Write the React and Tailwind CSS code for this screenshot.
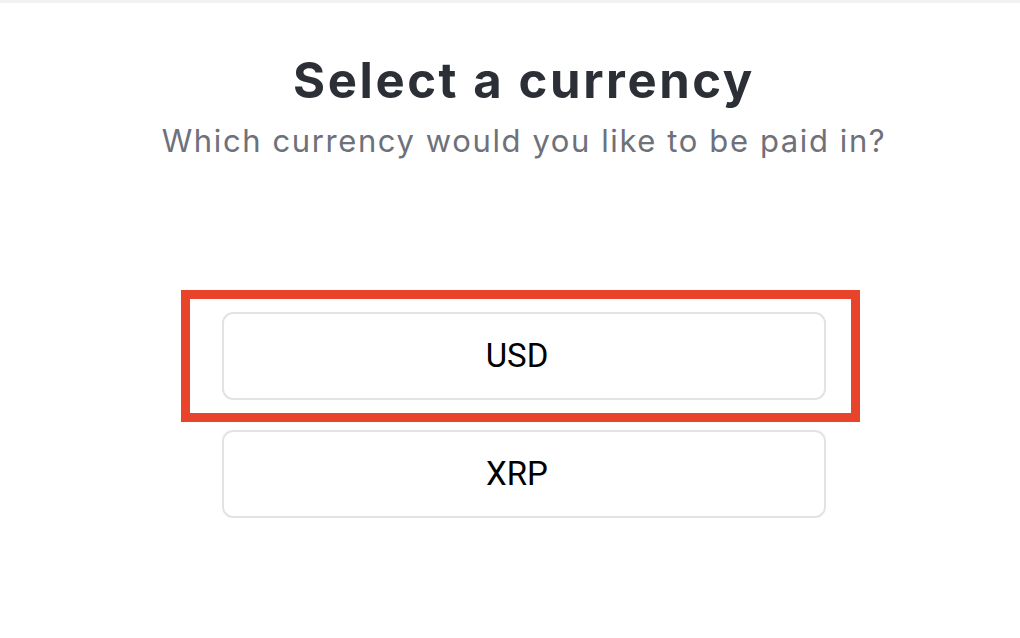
import React, { useState } from "react";

const currencies = ["USD", "XRP"];

export default function App() {
  const [selected, setSelected] = useState("USD");

  return (
    <div className="w-[1020px] h-[638px] bg-white overflow-hidden">
      <div className="h-[3px] bg-[#f2f2f2]" />
      <div className="flex flex-col items-center pl-[28px]">
        {/* Heading */}
        <h1 className="mt-[46px] text-[49px] leading-[64px] font-bold text-[#2c3036] font-['Inter',sans-serif] tracking-[2.6px]">
          Select a currency
        </h1>
        <p className="mt-[6px] text-[31px] leading-[44px] text-[#6e717a] font-['Inter',sans-serif] tracking-[1.6px]">
          Which currency would you like to be paid in?
        </p>

        {/* Options */}
        <div className="mt-[149px] flex flex-col gap-[30px] w-[604px]">
          {currencies.map((c) => (
            <div key={c} className="relative">
              <button
                onClick={() => setSelected(c)}
                className="w-full h-[88px] pr-[14px] rounded-[11px] border-2 border-[#e3e3e3] bg-white text-[33px] text-black font-['Roboto',sans-serif]"
              >
                {c}
              </button>
              {selected === c && (
                <div className="absolute left-[-41px] right-[-34px] top-[-22px] bottom-[-22px] border-[9px] border-[#e8432b] pointer-events-none" />
              )}
            </div>
          ))}
        </div>
      </div>
    </div>
  );
}
